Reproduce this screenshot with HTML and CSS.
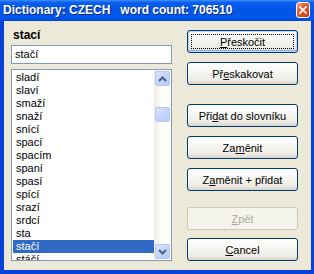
FILE: index.html
```html
<!DOCTYPE html>
<html>
<head>
  <title>Dictionary</title>
  <link rel="stylesheet" href="styles.css">
</head>
<body>
  <div class="window">
    <div class="titlebar">
      <span class="title">Dictionary: CZECH&nbsp;&nbsp; word count: 706510</span>
      <span class="close">
        <svg width="14" height="16" viewBox="0 0 14 16">
          <path d="M3.5 4.5 L10.5 11.5 M10.5 4.5 L3.5 11.5" stroke="#fff" stroke-width="2" stroke-linecap="square"/>
        </svg>
      </span>
    </div>

    <div class="body">
      <div class="left">
        <div class="word-label">stací</div>
        <div class="textbox">stačí</div>
        <div class="listbox">
          <ul class="items">
            <li>sladí</li>
            <li>slaví</li>
            <li>smaží</li>
            <li>snaží</li>
            <li>snící</li>
            <li>spací</li>
            <li>spacím</li>
            <li>spaní</li>
            <li>spasí</li>
            <li>spící</li>
            <li>srazí</li>
            <li>srdcí</li>
            <li>sta</li>
            <li class="selected">stačí</li>
            <li>stáčí</li>
          </ul>
          <div class="scrollbar">
            <div class="sb-button">
              <svg width="9" height="6" viewBox="0 0 9 6"><path d="M1 5 L4.5 1.5 L8 5" fill="none" stroke="#4d6185" stroke-width="2"/></svg>
            </div>
            <div class="sb-thumb"></div>
            <div class="sb-space"></div>
            <div class="sb-button">
              <svg width="9" height="6" viewBox="0 0 9 6"><path d="M1 1 L4.5 4.5 L8 1" fill="none" stroke="#4d6185" stroke-width="2"/></svg>
            </div>
          </div>
        </div>
      </div>

      <div class="buttons">
        <button class="btn focused"><span class="focus-rect"><u>P</u>řeskočit</span></button>
        <button class="btn">Př<u>e</u>skakovat</button>
        <button class="btn group">Při<u>d</u>at do slovníku</button>
        <button class="btn">Za<u>m</u>ěnit</button>
        <button class="btn">Z<u>a</u>měnit + přidat</button>
        <button class="btn group2" disabled><u>Z</u>pět</button>
        <button class="btn last"><u>C</u>ancel</button>
      </div>
    </div>
  </div>
</body>
</html>
```

FILE: styles.css
```css
body {
  margin: 0;
  padding: 0;
  font-family: "Liberation Sans", Arial, sans-serif;
  font-size: 11px;
  background-color: #ece9d8;
}

.window {
  width: 314px;
  height: 274px;
  display: flex;
  flex-direction: column;
  overflow: hidden;
}

.titlebar {
  height: 21px;
  display: flex;
  align-items: flex-start;
  background: linear-gradient(180deg, #3d8ffd 0%, #0a5ff0 12%, #0054e3 45%, #0058ee 85%, #0046d6 100%);
  color: #ffffff;
}

.title {
  font-weight: bold;
  font-size: 12px;
  padding-left: 3px;
  padding-top: 3px;
  line-height: 15px;
  flex: 1;
  text-shadow: 1px 1px 0 #0a2a8a;
  white-space: nowrap;
}

.close {
  width: 14px;
  height: 16px;
  margin-top: 2px;
  margin-right: 4px;
  border: 1px solid #ffffff;
  border-radius: 3px;
  background: linear-gradient(135deg, #f2a585 0%, #e25a2a 40%, #c83a10 100%);
  box-sizing: border-box;
  display: flex;
  align-items: center;
  justify-content: center;
}

.close svg {
  display: block;
}

.body {
  flex: 1;
  display: flex;
  border-left: 4px solid #0841d8;
  border-right: 3px solid #0841d8;
  border-bottom: 4px solid #0841d8;
  background-color: #ece9d8;
}

.left {
  width: 161px;
  margin-left: 7px;
  display: flex;
  flex-direction: column;
}

.word-label {
  font-weight: bold;
  font-size: 12px;
  line-height: 14px;
  margin-top: 7px;
  margin-left: 2px;
  margin-bottom: 3px;
}

.textbox {
  height: 19px;
  box-sizing: border-box;
  border: 1px solid #7f9db9;
  background-color: #ffffff;
  padding-left: 3px;
  line-height: 17px;
}

.listbox {
  margin-top: 5px;
  height: 192px;
  box-sizing: border-box;
  border: 1px solid #7f9db9;
  background-color: #ffffff;
  display: flex;
}

.items {
  flex: 1;
  list-style: none;
  margin: 0;
  padding: 1px 0 0 1px;
  overflow: hidden;
}

.items li {
  height: 13px;
  line-height: 13px;
  padding-left: 3px;
  white-space: nowrap;
}

.items li.selected {
  background-color: #316ac5;
  color: #ffffff;
}

.scrollbar {
  width: 17px;
  display: flex;
  flex-direction: column;
  background: linear-gradient(90deg, #eeede5 0%, #f3f2ec 20%, #fdfdfa 40%, #fefefe 100%);
}

.sb-button,
.sb-thumb {
  height: 15px;
  margin: 1px 1px 1px 1px;
  box-sizing: border-box;
  border: 1px solid #b5c8f3;
  border-radius: 2px;
  background: linear-gradient(135deg, #dce6fd 0%, #c6d5fc 50%, #b6caf8 100%);
  display: flex;
  align-items: center;
  justify-content: center;
}

.sb-button svg {
  display: block;
}

.sb-thumb {
  margin-top: 20px;
}

.sb-space {
  flex: 1;
}

.buttons {
  width: 111px;
  margin-left: 15px;
  padding-top: 9px;
  display: flex;
  flex-direction: column;
}

.btn {
  height: 23px;
  margin-bottom: 9px;
  padding: 0;
  font-family: "Liberation Sans", Arial, sans-serif;
  font-size: 11px;
  color: #000000;
  border: 1px solid #003c74;
  border-radius: 3px;
  background: linear-gradient(180deg, #ffffff 0%, #f6f6f2 40%, #eeede7 80%, #d8d3c8 100%);
  display: flex;
  align-items: center;
  justify-content: center;
}

.btn.focused {
  box-shadow: inset 0 0 0 1px #c2d4f5, inset 0 -1px 0 1px #8eb0e8;
  padding: 3px;
}

.focus-rect {
  flex: 1;
  align-self: stretch;
  border: 1px dotted #000000;
  display: flex;
  align-items: center;
  justify-content: center;
}

.btn.group {
  margin-top: 10px;
}

.btn.group2 {
  margin-top: 7px;
  margin-bottom: 8px;
}

.btn:disabled {
  color: #aca899;
  border-color: #c9c7ba;
  background: #f5f4ea;
}
```
